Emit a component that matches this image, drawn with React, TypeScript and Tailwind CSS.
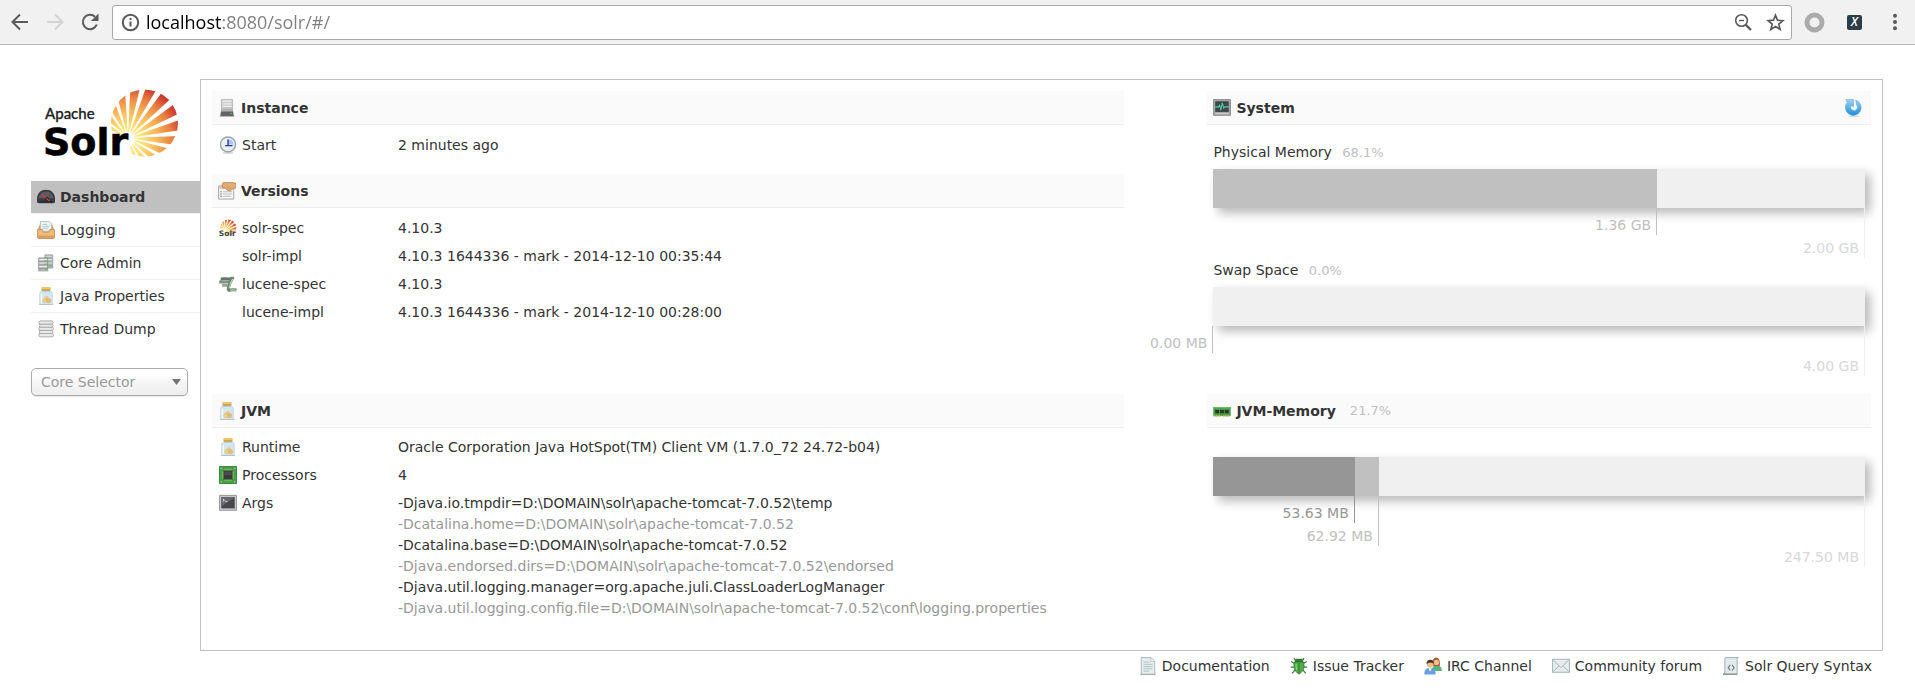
import React from "react"

const svg = "size-[18px] shrink-0"

const rayAngles = [150, 133, 116, 99, 82, 65, 48, 31, 14, -3, -20, -37, -54, -71]

function rayPoints(deg: number, cx: number, cy: number) {
  const at = (d: number) => {
    const r = (d * Math.PI) / 180
    return `${(cx + 80 * Math.cos(r)).toFixed(2)},${(cy - 80 * Math.sin(r)).toFixed(2)}`
  }
  return `${cx},${cy} ${at(deg - 5.4)} ${at(deg + 5.4)}`
}

function SunRays({ id }: { id: string }) {
  return (
    <>
      <defs>
        <radialGradient id={`${id}-fill`} gradientUnits="userSpaceOnUse" cx="82" cy="56" r="60">
          <stop offset="0" stopColor="#fff6b0" />
          <stop offset="0.25" stopColor="#fde27c" />
          <stop offset="0.5" stopColor="#f7b85a" />
          <stop offset="0.75" stopColor="#e9803f" />
          <stop offset="1" stopColor="#c4262c" />
        </radialGradient>
        <clipPath id={`${id}-clip`}>
          <circle cx="99.5" cy="38" r="33.5" />
        </clipPath>
      </defs>
      <g clipPath={`url(#${id}-clip)`} fill={`url(#${id}-fill)`}>
        {rayAngles.map((a) => (
          <polygon key={a} points={rayPoints(a, 83, 53)} />
        ))}
        <circle cx="83" cy="54" r="7" fill="#fff" />
      </g>
    </>
  )
}

function SolrLogo() {
  return (
    <svg className="overflow-visible" width="140" height="84" viewBox="0 0 140 84" role="img" aria-label="Apache Solr">
      <SunRays id="logo" />
      <text x="0" y="34" fontSize="15" fill="#222" stroke="#222" strokeWidth="0.3" fontFamily="Lato, sans-serif" fontWeight="500">
        Apache
      </text>
      <text x="-2" y="70" fontSize="38" fontWeight="bold" fill="#000" stroke="#000" strokeWidth="0.6" fontFamily="'DejaVu Sans', sans-serif">
        Solr
      </text>
    </svg>
  )
}

function SolrIcon() {
  return (
    <svg className={`${svg} overflow-visible`} viewBox="60 2 76 76" aria-hidden="true">
      <SunRays id="mini" />
      <text x="59" y="75" fontSize="32" fontWeight="bold" fill="#444" fontFamily="'DejaVu Sans', sans-serif">
        Solr
      </text>
    </svg>
  )
}

function GaugeIcon() {
  return (
    <svg className={svg} viewBox="0 0 16 16" aria-hidden="true">
      <path d="M0 9.500C0 4.500 3.500 1.500 8 1.500s8 3 8 8V12c0 .8-.5 1.500-1.500 1.500h-13C.5 13.500 0 12.800 0 12z" fill="#3c3d42" />
      <path d="M1.500 9C2 5.500 4.500 3 8 3s6 2.500 6.500 6z" fill="#5b5c61" />
      <path d="M2 11.500h12v1.200H2z" fill="#26272a" />
      <path d="M4 5.500L10.500 11" stroke="#d8393b" strokeWidth="1.200" />
      <circle cx="9" cy="9.800" r="1.800" fill="#2a2a2d" />
      <path d="M8.300 9.200L11 11.500" stroke="#e04848" strokeWidth="0.900" />
    </svg>
  )
}

function InboxIcon() {
  return (
    <svg className={svg} viewBox="0 0 16 16" aria-hidden="true">
      <path d="M1 7l1.500-4h11L15 7z" fill="#d99a5b" />
      <path d="M3 .5h8l2 2V9H3z" fill="#eef5f5" stroke="#9fb7b5" strokeWidth="0.700" />
      <path d="M5 3h4M5 4.700h6M5 6.400h5" stroke="#a9c3c1" strokeWidth="0.800" />
      <path d="M.5 7.500h4c.5 0 .5 2.300 1.300 2.300h4.400c.8 0 .8-2.300 1.300-2.300h4v7c0 .5-.3 1-1 1h-13c-.7 0-1-.5-1-1z" fill="#eebb7c" stroke="#bd7f42" strokeWidth="0.700" />
      <path d="M1 13h14v2H1z" fill="#dc9a55" />
    </svg>
  )
}

function ServersIcon() {
  return (
    <svg className={svg} viewBox="0 0 16 16" aria-hidden="true">
      <path d="M7 .8h7v11.500H7z" fill="#a9aeae" stroke="#858a8a" strokeWidth="0.600" />
      <path d="M7.500 2h6M7.500 5h6M7.500 8h6" stroke="#dfe3e3" />
      <path d="M1.500 3.500h8v11.300h-8z" fill="#b7bcbc" stroke="#7f8484" strokeWidth="0.700" />
      <path d="M2 5h7M2 8h7M2 11h7" stroke="#eef1f1" />
      <path d="M2 6.800h7M2 9.800h7M2 13h7" stroke="#8b9090" strokeWidth="0.800" />
      <path d="M6.500 6h2M6.500 9h2M11 10.300h2.300M7 13.500h2" stroke="#6bb36e" strokeWidth="0.900" />
      <path d="M.8 15.200h9.500M10.500 12.700h4" stroke="#c8c8c8" strokeWidth="0.800" />
    </svg>
  )
}

function JarIcon() {
  return (
    <svg className={svg} viewBox="0 0 16 16" aria-hidden="true">
      <path d="M4.200 3.300C2.900 4 2.400 5.200 2.400 6.500v8c0 .6.300 1 1 1h9.200c.7 0 1-.4 1-1v-8c0-1.300-.5-2.500-1.800-3.200z" fill="#d3e6f2" stroke="#b3cad8" strokeWidth="0.600" />
      <path d="M3.900 6v8.500" stroke="#f6fbfe" strokeWidth="1.200" />
      <path d="M4 .3h8v2.700H4z" fill="#d9a431" />
      <path d="M4 1.200h8" stroke="#f3cf6b" strokeWidth="0.900" />
      <path d="M4.500 3.400h7" stroke="#8d8a70" strokeWidth="0.600" />
      <circle cx="8.600" cy="9.600" r="1.700" fill="#ecca80" />
      <circle cx="7" cy="12" r="1.900" fill="#f0cf88" stroke="#d9b264" strokeWidth="0.400" />
      <circle cx="10.300" cy="12.200" r="1.900" fill="#e6bf6c" stroke="#d3a852" strokeWidth="0.400" />
      <path d="M1.500 15.600h13" stroke="#a9bcc8" strokeWidth="0.700" />
    </svg>
  )
}

function StackIcon() {
  return (
    <svg className={svg} viewBox="0 0 16 16" aria-hidden="true">
      <g fill="#e9e9e9" stroke="#a6a6a6" strokeWidth="0.800">
        <path d="M2.500 12h11.500l.8 1.600-.8 1.400H2.500L1.500 13.500z" />
        <path d="M1.800 9.200h11.700l.9 1.500-.9 1.300H1.800l.8-1.400z" />
        <path d="M2.500 6.400H14l.7 1.500-.9 1.300H2.500L1.600 7.800z" />
        <path d="M1.800 3.600h11.700l.9 1.500-.9 1.300H1.800l.8-1.400z" />
        <path d="M2.500 .8h11l1 1.500-1 1.300h-11l-1-1.400z" />
      </g>
    </svg>
  )
}

function ServerIcon() {
  return (
    <svg className={svg} viewBox="0 0 16 16" aria-hidden="true">
      <path d="M3 .3h10V12H3z" fill="#cbcbcb" stroke="#a9a9a9" strokeWidth="0.600" />
      <path d="M4 2h8M4 4.300h8M4 6.600h8" stroke="#ededed" strokeWidth="1.200" />
      <path d="M3 8.500h10v3H3z" fill="#b4b4b4" />
      <path d="M2.600 11h10.800l.6 4H2z" fill="#636363" />
      <path d="M11 12.300h1.500v1H11z" fill="#55c455" />
      <path d="M1.500 15.500h13" stroke="#a0a0a0" strokeWidth="0.700" />
    </svg>
  )
}

function ClockIcon() {
  return (
    <svg className={svg} viewBox="0 0 16 16" aria-hidden="true">
      <ellipse cx="8" cy="15" rx="5" ry="0.900" fill="#dedede" />
      <circle cx="8" cy="7.500" r="6.700" fill="#e9eff2" stroke="#9aa5aa" strokeWidth="1.300" />
      <path d="M8 7.500V2.700a4.800 4.800 0 0 1 4.800 4.800z" fill="#a9c3f4" />
      <path d="M8 3v5.500M5.500 8.500h6.500" stroke="#26389a" strokeWidth="1.200" />
    </svg>
  )
}

function VersionsIcon() {
  return (
    <svg className={svg} viewBox="0 0 16 16" aria-hidden="true">
      <path d="M.5 3.500h13.500v11.700H.5z" fill="#f3f3f3" stroke="#a4a4a4" strokeWidth="0.800" />
      <path d="M1 4h13v2H1z" fill="#c7c7c7" />
      <path d="M2 8.700h1.400" stroke="#4ea94e" />
      <path d="M2 10.700h1.400" stroke="#d05050" />
      <path d="M2 12.700h1.400" stroke="#5470d0" />
      <path d="M4.500 8.700h8M4.500 10.700h8M4.500 12.700h7" stroke="#c3c3c3" strokeWidth="0.900" />
      <path d="M4.500 .5h8.500l3 .7v4l-3 1-2.500 2-2.500-1.200-2-2-1.500.5L3.500 3z" fill="#e3ac72" stroke="#b57c42" strokeWidth="0.600" />
      <path d="M8 5.500l1.500-1M10 6.300l1.500-1.500" stroke="#b57c42" strokeWidth="0.600" />
    </svg>
  )
}

function LuceneIcon() {
  return (
    <svg className={svg} viewBox="0 0 16 16" aria-hidden="true">
      <path d="M1.500 2.500C5 1.300 8 3 13.500 1.300L11.800 5C8 5.500 4.500 4 1.500 5z" fill="#66756a" />
      <path d="M0 5.200c3-1.200 6 .6 11-.4l-1 2.700C6.500 8 3.500 7 .5 7.800z" fill="#829085" />
      <path d="M2.500 8.300c2.500-.7 4.500.3 7.300-.4L9 10.400c-2.500.5-4-.3-6 .2z" fill="#97a399" />
      <path d="M12.500 2C10.500 5 9 8 8.300 11.500c-.4 2 .7 2.200 1.900 1.900 1.500-.4 3.300-.4 5.300 0" fill="none" stroke="#6b8570" strokeWidth="2.800" />
      <path d="M12.300 3.500c-1.700 2.500-2.800 5-3.300 8.300M10 13.500c2-.4 3.500-.3 5 0" fill="none" stroke="#b4e2ae" />
    </svg>
  )
}

function ChipIcon() {
  return (
    <svg className={svg} viewBox="0 0 16 16" aria-hidden="true">
      <path d="M.4 .4h15.200v15.200H.4z" fill="#43a047" stroke="#2f7a34" strokeWidth="0.800" />
      <path d="M5.500 2.500v11M7.200 2.500v11M8.900 2.500v11M10.600 2.500v11M2.500 5.500h11M2.500 7.200h11M2.500 8.900h11M2.500 10.600h11" stroke="#b5cf72" strokeWidth="0.700" />
      <path d="M4 4h8v8H4z" fill="#3a3a3c" />
      <path d="M5 5h6v3H5z" fill="#4c4c50" />
      <path d="M1.500 2h1M13.500 2h1M1.500 14h1M13.500 14h1" stroke="#e2ec9c" />
    </svg>
  )
}

function TerminalIcon() {
  return (
    <svg className={svg} viewBox="0 0 16 16" aria-hidden="true">
      <path d="M.4 1.200h15.200v13.300H.4z" fill="#c9c9c9" stroke="#8e8e8e" strokeWidth="0.800" />
      <path d="M2 2.800h12v10H2z" fill="#48484c" />
      <path d="M2 2.800h12L2 11z" fill="#67676d" />
      <path d="M3.300 4.500l1.500 1-1.500 1M5.500 6.500h2" fill="none" stroke="#eee" strokeWidth="0.800" />
    </svg>
  )
}

function MonitorIcon() {
  return (
    <svg className={svg} viewBox="0 0 16 16" aria-hidden="true">
      <path d="M.5 .5h15v14H.5z" fill="#a9a9a9" stroke="#868686" strokeWidth="0.800" />
      <path d="M2 2h12v9.500H2z" fill="#3e4647" />
      <path d="M2 7h3l1-1.500L7 10l1.200-6.500L9.500 8l1-1H14" fill="none" stroke="#4fd0a5" strokeWidth="0.900" />
      <path d="M2 13h12" stroke="#d2d2d2" strokeWidth="0.900" />
    </svg>
  )
}

function MemoryIcon() {
  return (
    <svg className={svg} viewBox="0 0 16 16" aria-hidden="true">
      <path d="M.3 4.500h15.400v8H.3z" fill="#3f9a41" />
      <path d="M.3 4.500h15.400v1.200H.3z" fill="#6cbb62" />
      <path d="M2 7h3.300v3H2zM6.300 7h3.300v3H6.300zM10.600 7h3.300v3h-3.300z" fill="#2c332c" />
      <path d="M1 12.200h6.500M9 12.200h6" stroke="#b9bd55" strokeWidth="1.600" strokeDasharray="1 0.500" />
    </svg>
  )
}

function RefreshIcon() {
  return (
    <svg className={svg} viewBox="0 0 16 16" aria-hidden="true">
      <defs>
        <linearGradient id="refresh-fill" x1="0" y1="0" x2="0" y2="1">
          <stop offset="0" stopColor="#9ed3f3" />
          <stop offset="1" stopColor="#1c8fdc" />
        </linearGradient>
      </defs>
      <ellipse cx="8" cy="15.300" rx="5" ry="0.600" fill="#d6d6d6" />
      <path d="M.8 .4h6.700V7L5.600 5.600a3 3 0 1 0 4.600-.4L9.500.9A7 7 0 1 1 2 3z" fill="url(#refresh-fill)" stroke="#3c9ad6" strokeWidth="0.400" />
    </svg>
  )
}

function DocIcon() {
  return (
    <svg className={svg} viewBox="0 0 16 16" aria-hidden="true">
      <path d="M2 .5h8.500L14 4v11.300H2z" fill="#e4eeec" stroke="#a3b6b4" strokeWidth="0.800" />
      <path d="M10.500 .5V4H14z" fill="#fff" stroke="#a3b6b4" strokeWidth="0.600" />
      <path d="M4 4.500h5M4 6.500h8M4 8.500h8M4 10.500h8M4 12.500h5" stroke="#a9bfbc" strokeWidth="0.800" />
      <path d="M1 15.600h14" stroke="#8d9c9a" strokeWidth="0.600" />
    </svg>
  )
}

function BugIcon() {
  return (
    <svg className={svg} viewBox="0 0 16 16" aria-hidden="true">
      <path d="M5 3.500L3.500 1M11 3.500L12.500 1M4.500 6L1 4M11.500 6L15 4M4 9H.7M12 9h3.300M4.500 11.500L2 14.500M11.500 11.500l2.500 3" stroke="#3d7a3b" strokeWidth="1.100" />
      <path d="M5 1.500h6l1 3.500H4z" fill="#347a33" />
      <path d="M4 4.500h8c1 3 .8 8-4 10.700C3.200 12.500 3 7.500 4 4.500z" fill="#4fae4a" stroke="#2f7630" strokeWidth="0.700" />
      <path d="M8 5v10" stroke="#2f7630" strokeWidth="0.800" />
      <path d="M5.500 6c-.3 2-.2 4 .7 5.500" fill="none" stroke="#8fda83" strokeWidth="0.900" />
    </svg>
  )
}

function UsersIcon() {
  return (
    <svg className={svg} viewBox="0 0 16 16" aria-hidden="true">
      <path d="M7 12.500c0-3.500 1.500-5 4.500-5s4.300 2 4.300 4.500c0 .4-.3.500-.8.500z" fill="#58b27c" />
      <path d="M7.500 8c-.5-4 .5-7.500 3.300-7.500S14.500 4 14 8z" fill="#b1592c" />
      <circle cx="11" cy="4.800" r="2.400" fill="#eebd92" />
      <path d="M.3 15c0-3.500 1.500-5.200 5-5.200s5 1.700 5 5.200c0 .3-.2.500-.5.500H.8c-.3 0-.5-.2-.5-.5z" fill="#6a9fdf" />
      <path d="M4 10l1.300 3L7 10z" fill="#fff" />
      <circle cx="5.500" cy="6.500" r="3" fill="#f0bd8c" />
      <path d="M2.300 6.500C2 3.800 3.500 2.500 5.700 2.500s3.500 1.500 3 4C8 5.300 7 5 5.500 5s-2.700.5-3.200 1.500z" fill="#4b392f" />
    </svg>
  )
}

function MailIcon() {
  return (
    <svg className={svg} viewBox="0 0 16 16" aria-hidden="true">
      <path d="M.5 2h15v11.500H.5z" fill="#e5ecec" stroke="#a5b5b5" strokeWidth="0.900" />
      <path d="M1 2.500l7 7 7-7M1 13l5-5M15 13l-5-5" fill="none" stroke="#9fb0b0" strokeWidth="0.800" />
    </svg>
  )
}

function ScriptIcon() {
  return (
    <svg className={svg} viewBox="0 0 16 16" aria-hidden="true">
      <path d="M3.500 .5h11c-1 .6-1 1.500-1 2.500v12.300H1c1.500-.5 1.500-1.500 1.500-3V2c0-.9.400-1.500 1-1.500z" fill="#e2eaea" stroke="#98a8a8" strokeWidth="0.800" />
      <path d="M1 15.300h12.500" stroke="#7c8b8b" />
      <path d="M7.300 7L5.500 9.500l1.800 2.500M9 7l1.800 2.500L9 12" fill="none" stroke="#6f7c7c" />
    </svg>
  )
}

const NAV = [
  { label: "Dashboard", icon: <GaugeIcon />, active: true },
  { label: "Logging", icon: <InboxIcon /> },
  { label: "Core Admin", icon: <ServersIcon /> },
  { label: "Java Properties", icon: <JarIcon /> },
  { label: "Thread Dump", icon: <StackIcon /> },
]

const VERSIONS = [
  { label: "solr-spec", value: "4.10.3", icon: <SolrIcon /> },
  { label: "solr-impl", value: "4.10.3 1644336 - mark - 2014-12-10 00:35:44" },
  { label: "lucene-spec", value: "4.10.3", icon: <LuceneIcon /> },
  { label: "lucene-impl", value: "4.10.3 1644336 - mark - 2014-12-10 00:28:00" },
]

const ARGS = [
  "-Djava.io.tmpdir=D:\\DOMAIN\\solr\\apache-tomcat-7.0.52\\temp",
  "-Dcatalina.home=D:\\DOMAIN\\solr\\apache-tomcat-7.0.52",
  "-Dcatalina.base=D:\\DOMAIN\\solr\\apache-tomcat-7.0.52",
  "-Djava.endorsed.dirs=D:\\DOMAIN\\solr\\apache-tomcat-7.0.52\\endorsed",
  "-Djava.util.logging.manager=org.apache.juli.ClassLoaderLogManager",
  "-Djava.util.logging.config.file=D:\\DOMAIN\\solr\\apache-tomcat-7.0.52\\conf\\logging.properties",
]

const LINKS = [
  { label: "Documentation", icon: <DocIcon /> },
  { label: "Issue Tracker", icon: <BugIcon /> },
  { label: "IRC Channel", icon: <UsersIcon /> },
  { label: "Community forum", icon: <MailIcon /> },
  { label: "Solr Query Syntax", icon: <ScriptIcon /> },
]

function Toolbar() {
  return (
    <header className="flex h-[45px] items-center border-b border-[#b6b6b6] bg-[#f1f1f1] pb-1 pt-1">
      <div className="flex w-28 items-center gap-[15px] pl-[10px]">
        <button aria-label="Back">
          <svg width="20" height="20" viewBox="0 0 20 20" fill="none" stroke="#5a5a5a" strokeWidth="2">
            <path d="M18 10H3M10 2.500L2.500 10l7.500 7.500" />
          </svg>
        </button>
        <button aria-label="Forward" disabled>
          <svg width="20" height="20" viewBox="0 0 20 20" fill="none" stroke="#d3d3d3" strokeWidth="2">
            <path d="M2 10h15M10 2.500l7.500 7.500-7.500 7.500" />
          </svg>
        </button>
        <button aria-label="Reload">
          <svg width="20" height="20" viewBox="0 0 20 20" fill="none" stroke="#5a5a5a" strokeWidth="2">
            <path d="M16.800 12.500A7.200 7.200 0 1 1 15 4.700" />
            <path d="M18.500 1.500V9H11z" fill="#5a5a5a" stroke="none" />
          </svg>
        </button>
      </div>
      <div className="flex h-[35px] flex-1 items-center rounded-[3px] border border-[#a8a8a8] bg-white pl-2 pr-[6px]">
        <svg width="19" height="19" viewBox="0 0 19 19" fill="none" stroke="#5a5a5a" strokeWidth="2" aria-hidden="true">
          <circle cx="9.500" cy="9.500" r="7.700" />
          <path d="M9.500 8.500v5M9.500 5v2" />
        </svg>
        <input
          aria-label="Address"
          defaultValue="localhost:8080/solr/#/"
          className="ml-[6px] h-7 flex-1 bg-[linear-gradient(90deg,#000_75px,#7d7d7d_75px)] bg-clip-text font-['Open_Sans','Noto_Sans',sans-serif] text-lg leading-7 text-transparent outline-none"
        />
        <button aria-label="Zoom" className="mr-[13px]">
          <svg width="19" height="19" viewBox="0 0 19 19" fill="none" stroke="#5a5a5a">
            <circle cx="7.500" cy="7.500" r="5.800" strokeWidth="1.600" />
            <path d="M5 7.500h5" strokeWidth="1.400" />
            <path d="M11.800 11.800l5.200 5.200" strokeWidth="2.400" />
          </svg>
        </button>
        <button aria-label="Bookmark">
          <svg width="19" height="19" viewBox="0 0 19 19" fill="none" stroke="#5a5a5a" strokeWidth="1.700">
            <path d="M9.500 2.200l2 5 5.400.4-4.100 3.500 1.300 5.300-4.600-2.900-4.600 2.900 1.300-5.300-4.100-3.500 5.400-.4z" />
          </svg>
        </button>
      </div>
      <div className="flex items-center pl-3">
        <button aria-label="Extension">
          <svg width="21" height="21" viewBox="0 0 21 21" fill="none">
            <circle cx="10.500" cy="10.500" r="7.500" stroke="#ababab" strokeWidth="5" />
          </svg>
        </button>
        <button
          aria-label="XPath extension"
          className="ml-[22px] flex size-[15px] items-center justify-center rounded-[2px] bg-[#2c3e48] font-['Open_Sans',sans-serif] text-xs font-semibold italic leading-none text-white"
        >
          X
        </button>
        <button aria-label="Menu" className="ml-7 mr-[15px]">
          <svg width="10" height="18" viewBox="0 0 10 18" fill="#5a5a5a">
            <circle cx="5" cy="2.700" r="2" />
            <circle cx="5" cy="9" r="2" />
            <circle cx="5" cy="15.300" r="2" />
          </svg>
        </button>
      </div>
    </header>
  )
}

function SectionHead({
  icon,
  title,
  percent,
  action,
}: {
  icon: React.ReactNode
  title: string
  percent?: string
  action?: React.ReactNode
}) {
  return (
    <div className="flex h-[34px] items-center border-b border-[#ededed] bg-[#fafafa] pl-[6px] pr-2">
      {icon}
      <h2 className="ml-[5px] font-bold leading-5">{title}</h2>
      {percent && <span className="ml-[14px] text-[13px] leading-5 text-[#c0c0c0]">{percent}</span>}
      {action && <div className="ml-auto flex">{action}</div>}
    </div>
  )
}

function Row({ icon, label, children }: { icon?: React.ReactNode; label: string; children: React.ReactNode }) {
  return (
    <div className="flex py-1 pl-[7px] leading-5">
      <dt className="flex w-[179px] shrink-0 gap-[5px]">
        <span className="flex w-[18px] items-start pt-px">{icon}</span>
        {label}
      </dt>
      <dd>{children}</dd>
    </div>
  )
}

type Segment = { percent: number; label: string; fill: string; tag: string }

// Every segment starts at the left edge, the shorter ones are painted on top.
function MemoryBar({ segments }: { segments: Segment[] }) {
  return (
    <div className="grid">
      {segments.map((s) => (
        <div key={s.label} className="col-start-1 row-start-1 flex flex-col items-end" style={{ width: `${s.percent}%` }}>
          <div className={`h-[39px] w-full ${s.fill}`} />
          <div className={`whitespace-nowrap border-r pr-[5px] leading-5 ${s.tag}`}>{s.label}</div>
        </div>
      ))}
    </div>
  )
}

const total = "bg-[#f0f0f0] shadow-[5px_5px_10px_#b8b8b8]"

export default function App() {
  return (
    <div className="min-h-screen bg-white font-['DejaVu_Sans',Verdana,sans-serif] text-sm text-[#333]">
      <Toolbar />
      <div className="flex pl-[31px] pr-8 pt-[34px]">
        <aside className="w-[169px] shrink-0">
          <a href="#/" className="block h-[102px] pl-[14px] pt-[6px]">
            <SolrLogo />
          </a>
          <nav>
            <ul>
              {NAV.map((n) => (
                <li key={n.label} className="border-b border-[#f0f0f0] last:border-0">
                  <a
                    href="#/"
                    className={
                      n.active
                        ? "flex h-8 items-center gap-[5px] bg-[#c0c0c0] pl-[6px] font-bold"
                        : "flex h-8 items-center gap-[5px] pl-[6px]"
                    }
                  >
                    {n.icon}
                    {n.label}
                  </a>
                </li>
              ))}
            </ul>
          </nav>
          <div className="relative mr-3 mt-[23px]">
            <select
              aria-label="Core Selector"
              className="h-7 w-full appearance-none rounded-[5px] border border-[#aaa] bg-linear-to-b from-white from-20% via-[#f6f6f6] via-50% to-[#eeeeee] pl-[9px] leading-5 text-[#999] shadow-[0_1px_1px_#0000001a]"
            >
              <option>Core Selector</option>
            </select>
            <svg className="pointer-events-none absolute right-[7px] top-[11px]" width="9" height="6" viewBox="0 0 9 6" aria-hidden="true">
              <path d="M0 0h9L4.500 6z" fill="#757575" />
            </svg>
          </div>
        </aside>

        <div className="min-w-0 flex-1">
          <main className="grid grid-cols-[55%_40%] justify-between border border-[#c0c0c0] px-[11px] pb-[27px] pt-[11px]">
            <div>
              <section>
                <SectionHead icon={<ServerIcon />} title="Instance" />
                <dl className="pt-[6px]">
                  <Row icon={<ClockIcon />} label="Start">
                    2 minutes ago
                  </Row>
                </dl>
              </section>
              <section className="mt-[15px]">
                <SectionHead icon={<VersionsIcon />} title="Versions" />
                <dl className="pt-[6px]">
                  {VERSIONS.map((v) => (
                    <Row key={v.label} icon={v.icon} label={v.label}>
                      {v.value}
                    </Row>
                  ))}
                </dl>
              </section>
            </div>

            <section className="mb-[18px]">
              <SectionHead
                icon={<MonitorIcon />}
                title="System"
                action={
                  <button aria-label="Refresh">
                    <RefreshIcon />
                  </button>
                }
              />
              <div className="px-[6px] pt-[17px]">
                <h3 className="mb-[6px] leading-5">
                  Physical Memory <span className="ml-[6px] text-[13px] text-[#c0c0c0]">68.1%</span>
                </h3>
                <MemoryBar
                  segments={[
                    { percent: 100, label: "2.00 GB", fill: total, tag: "border-[#efefef] pt-[30px] text-[#d8d8d8]" },
                    { percent: 68.1, label: "1.36 GB", fill: "bg-[#c0c0c0]", tag: "border-[#c0c0c0] pt-[7px] text-[#c0c0c0]" },
                  ]}
                />
                <h3 className="mb-[6px] mt-[2px] leading-5">
                  Swap Space <span className="ml-[6px] text-[13px] text-[#c0c0c0]">0.0%</span>
                </h3>
                <MemoryBar
                  segments={[
                    { percent: 100, label: "4.00 GB", fill: total, tag: "border-[#efefef] pt-[30px] text-[#d8d8d8]" },
                    { percent: 0, label: "0.00 MB", fill: "bg-[#c0c0c0]", tag: "border-[#c0c0c0] pt-[7px] text-[#c0c0c0]" },
                  ]}
                />
              </div>
            </section>

            <section>
              <SectionHead icon={<JarIcon />} title="JVM" />
              <dl className="pt-[5px]">
                <Row icon={<JarIcon />} label="Runtime">
                  Oracle Corporation Java HotSpot(TM) Client VM (1.7.0_72 24.72-b04)
                </Row>
                <Row icon={<ChipIcon />} label="Processors">
                  4
                </Row>
                <Row icon={<TerminalIcon />} label="Args">
                  <ul className="leading-[21px]">
                    {ARGS.map((a) => (
                      <li key={a} className="even:text-[#999]">
                        {a}
                      </li>
                    ))}
                  </ul>
                </Row>
              </dl>
            </section>

            <section>
              <SectionHead icon={<MemoryIcon />} title="JVM-Memory" percent="21.7%" />
              <div className="px-[6px] pt-[29px]">
                <MemoryBar
                  segments={[
                    { percent: 100, label: "247.50 MB", fill: total, tag: "border-[#efefef] pt-[51px] text-[#d8d8d8]" },
                    { percent: 25.4, label: "62.92 MB", fill: "bg-[#c0c0c0]", tag: "border-[#c0c0c0] pt-[30px] text-[#c0c0c0]" },
                    { percent: 21.7, label: "53.63 MB", fill: "bg-[#969696]", tag: "border-[#969696] pt-[7px] text-[#969696]" },
                  ]}
                />
              </div>
            </section>
          </main>

          <footer className="flex justify-end gap-5 pr-[11px] pt-[5px]">
            {LINKS.map((l) => (
              <a key={l.label} href="#/" className="flex items-center gap-[5px] leading-5">
                {l.icon}
                {l.label}
              </a>
            ))}
          </footer>
        </div>
      </div>
    </div>
  )
}
